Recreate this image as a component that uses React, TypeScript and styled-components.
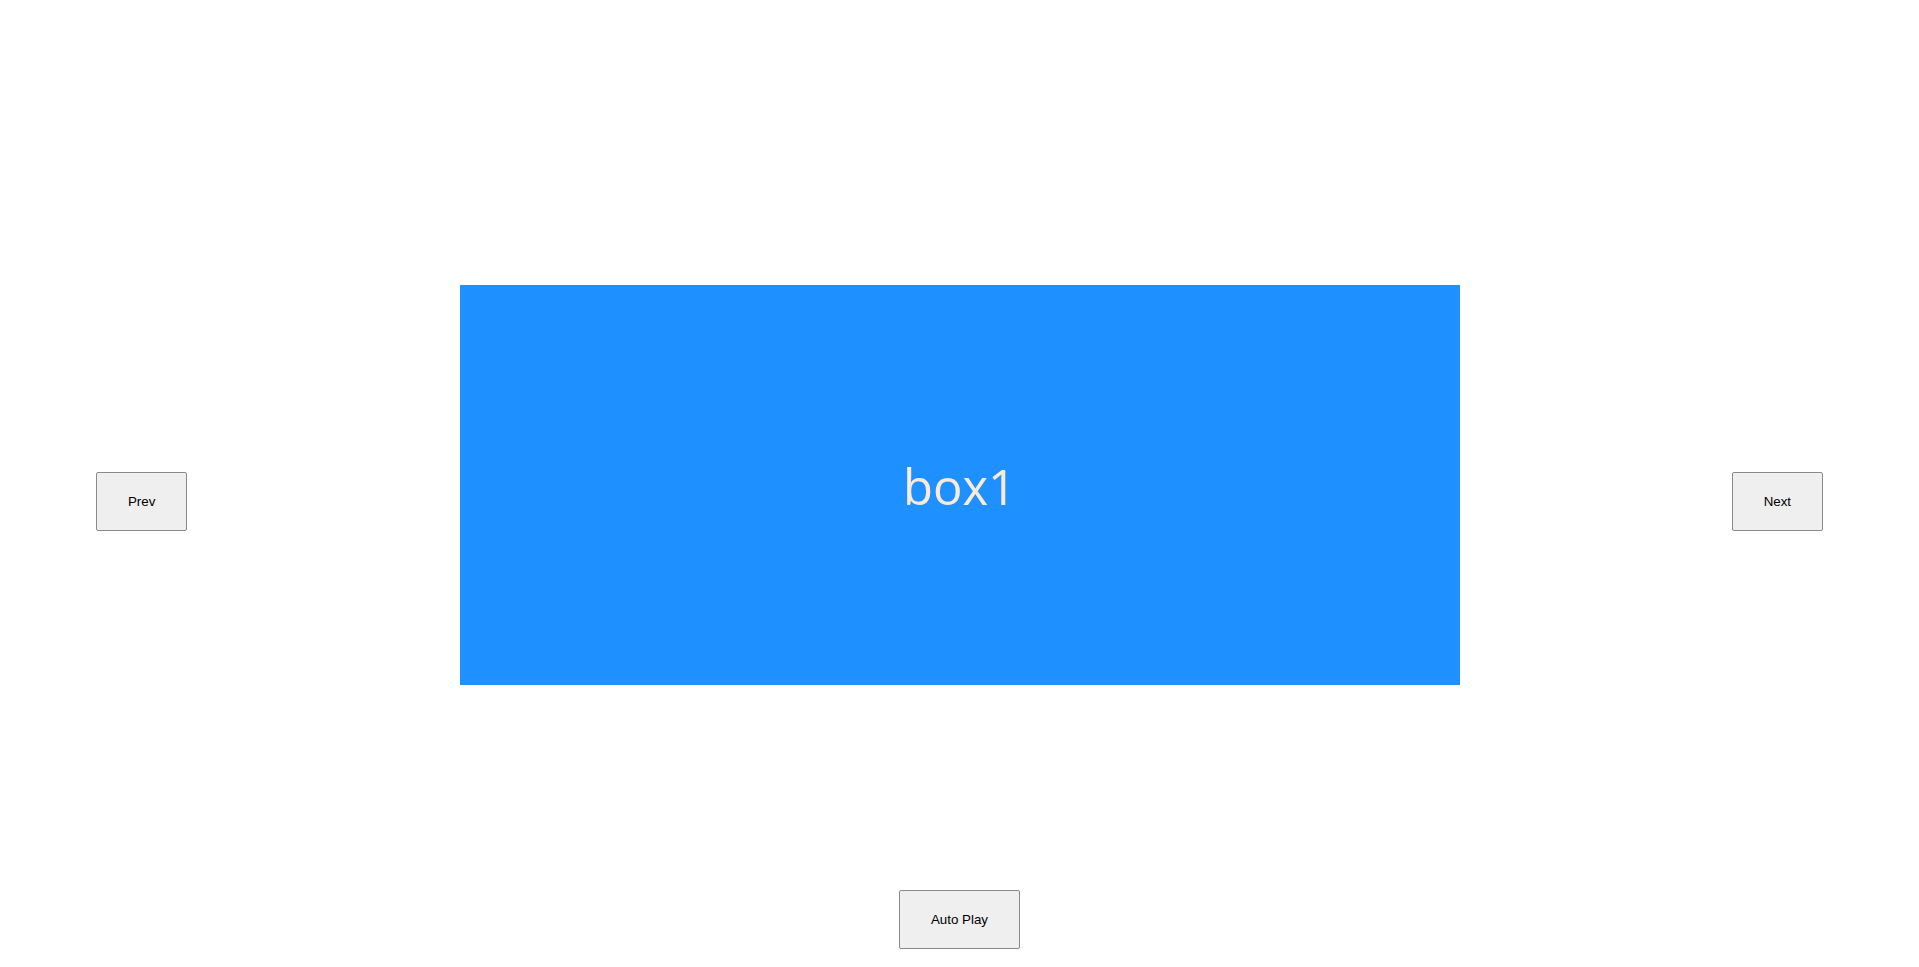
import React, { useEffect, useState } from "react";
import styled, { createGlobalStyle } from "styled-components";

const Global = createGlobalStyle`
  html, body { margin: 0; padding: 0; background: #ffffff; }
  body { font-family: "Liberation Sans", Arial, sans-serif; }
`;

const Page = styled.div`
  display: flex;
  flex-direction: column;
  align-items: stretch;
  padding-top: 285px;
`;

const Row = styled.div`
  display: flex;
  justify-content: space-between;
  align-items: center;
  padding: 0 5%;
`;

const Stage = styled.div`
  display: flex;
  flex-direction: column;
`;

const Slide = styled.div<{ $color: string }>`
  width: 1000px;
  height: 400px;
  background: ${(p) => p.$color};
  color: #faebd7;
  display: flex;
  align-items: center;
  justify-content: center;
  font-family: "Open Sans", "Noto Sans", sans-serif;
  font-size: 49px;
  padding-top: 2px;
  box-sizing: border-box;
`;

const DotsBar = styled.div`
  height: 32px;
`;

const Button = styled.button`
  font-family: "Liberation Sans", Arial, sans-serif;
  font-size: 13.333px;
  color: #000;
  background: #efefef;
  border: 1px solid #8a8a8a;
  border-radius: 2px;
  padding: 21px 31px;
  cursor: pointer;
`;

const Controls = styled.div`
  display: flex;
  justify-content: center;
  padding-top: 173px;
`;

const slides = [
  { label: "box1", color: "#1e90ff" },
  { label: "box2", color: "#ff6347" },
  { label: "box3", color: "#3cb371" },
];

export default function App() {
  const [index, setIndex] = useState(0);
  const [auto, setAuto] = useState(false);

  useEffect(() => {
    if (!auto) return;
    const t = setInterval(() => setIndex((i) => (i + 1) % slides.length), 2000);
    return () => clearInterval(t);
  }, [auto]);

  const current = slides[index];

  return (
    <>
      <Global />
      <Page>
        <Row>
          <Button onClick={() => setIndex((i) => (i - 1 + slides.length) % slides.length)}>Prev</Button>
          <Stage>
            <Slide $color={current.color}>{current.label}</Slide>
            <DotsBar />
          </Stage>
          <Button onClick={() => setIndex((i) => (i + 1) % slides.length)}>Next</Button>
        </Row>
        <Controls>
          <Button onClick={() => setAuto((a) => !a)}>Auto Play</Button>
        </Controls>
      </Page>
    </>
  );
}
